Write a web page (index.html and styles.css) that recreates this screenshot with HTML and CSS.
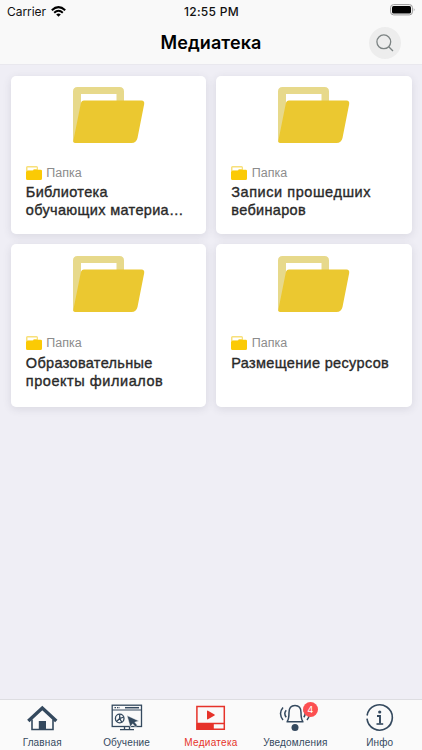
FILE: index.html
```html
<!DOCTYPE html>
<html lang="ru">
<head>
<meta charset="utf-8">
<title>Медиатека</title>
<link rel="stylesheet" href="styles.css">
</head>
<body>
<svg class="defs" width="0" height="0" aria-hidden="true">
  <symbol id="folder" viewBox="0 0 72 56">
    <path fill="#e7d98b" fill-rule="evenodd" d="M4.500 0H46.500Q51 0 51 4.500V17H8L1 55Q0 55 0 53V4.500Q0 0 4.500 0ZM8 7V17H43.500V7Z"/>
    <path fill="#e7d98b" d="M0 16H9L2 55H0Z"/>
    <path fill="#ebc830" d="M11 13.500H68.500Q71.700 13.500 71.200 17L64.500 51Q63.300 56 58.500 56H2Q0 56 .4 53.500L7.800 16.500Q8.400 13.500 11 13.500Z"/>
  </symbol>
  <symbol id="folder-small" viewBox="0 0 16 14">
    <path fill="#f8e07a" fill-rule="evenodd" d="M1.500 0H10.500Q12 0 12 1.500V5H0V1.500Q0 0 1.500 0ZM1.500 1.500V4H7L8 3H10.700V1.500Z"/>
    <path fill="#fbca05" d="M1 5H6.500L8 3.700H14.800Q16 3.700 16 5V12.500Q16 14 14.500 14H1.500Q0 14 0 12.500V6Q0 5 1 5Z"/>
  </symbol>
</svg>
<div class="app">
  <header class="header">
    <div class="status">
      <div class="carrier"><span>Carrier</span>
        <svg width="15" height="11" viewBox="0 0 15 11"><g fill="none" stroke="#000" stroke-width="2"><path d="M.8 4.200Q7.500-2 14.200 4.200"/><path d="M3.200 6.700Q7.500 2.900 11.800 6.700"/></g><path d="M7.500 10.800L5.200 8.400Q7.500 6.500 9.800 8.400Z"/></svg>
      </div>
      <div class="time">12:55 PM</div>
      <svg class="battery" width="26" height="12" viewBox="0 0 26 12"><rect x=".6" y=".6" width="21.800" height="10.300" rx="3" fill="none" stroke="#999"/><rect x="2" y="2" width="19" height="7.500" rx="1.500"/><path d="M23.800 4Q25.300 5.700 23.800 7.500Z" fill="#888"/></svg>
    </div>
    <div class="titlebar">
      <h1>Медиатека</h1>
      <button class="search" aria-label="Поиск"><svg width="18" height="18" viewBox="0 0 18 18" fill="none" stroke="#7c8383" stroke-width="1.300"><circle cx="7.800" cy="7.800" r="6.900"/><path d="M12.700 12.700L17 17"/></svg></button>
    </div>
  </header>
  <main class="grid">
    <article class="card">
      <svg class="folder"><use href="#folder"/></svg>
      <div class="kind"><svg><use href="#folder-small"/></svg><span>Папка</span></div>
      <h2>Библиотека<br>обучающих материа…</h2>
    </article>
    <article class="card">
      <svg class="folder"><use href="#folder"/></svg>
      <div class="kind"><svg><use href="#folder-small"/></svg><span>Папка</span></div>
      <h2><span class="wide">Записи прошедших</span><br>вебинаров</h2>
    </article>
    <article class="card tall">
      <svg class="folder"><use href="#folder"/></svg>
      <div class="kind"><svg><use href="#folder-small"/></svg><span>Папка</span></div>
      <h2>Образовательные<br><span class="wide">проекты филиалов</span></h2>
    </article>
    <article class="card tall">
      <svg class="folder"><use href="#folder"/></svg>
      <div class="kind"><svg><use href="#folder-small"/></svg><span>Папка</span></div>
      <h2>Размещение ресурсов</h2>
    </article>
  </main>
  <nav class="tabs">
    <a class="tab">
      <svg width="32" height="30" viewBox="0 0 32 30"><path fill="none" stroke="#34495e" stroke-width="3.400" d="M2.300 18L16.300 5L30.300 18"/><path fill="none" stroke="#34495e" stroke-width="1.600" d="M6 16.500V26.500H27V16.500"/><path fill="#34495e" d="M12.800 18H20V26.500H12.800Z"/></svg>
      <span>Главная</span>
    </a>
    <a class="tab">
      <svg width="32" height="30" viewBox="0 0 32 30" fill="none" stroke="#34495e" stroke-width="1.300"><rect x="1.200" y="2.200" width="29.300" height="21.300"/><path d="M1 7H30.500" stroke-width="1"/><path stroke-dasharray="1.500 1" d="M3.500 4.700H9"/><path stroke-width="1.500" d="M14 4.700H28"/><circle cx="8.700" cy="15.500" r="4.300"/><path d="M8.700 11.200V15.500L12.700 14M8.700 15.500L5.500 18.500M8.700 15.500L11 19.500"/><path d="M13.500 23.500V26M18.500 23.500V26M9 26.700H23"/><path fill="#34495e" stroke="#fafafa" stroke-width=".5" d="M16 12.500L28 18L23.800 19.200L26.400 22.300L24.300 24L21.700 20.800L19.300 24Z"/></svg>
      <span>Обучение</span>
    </a>
    <a class="tab active">
      <svg width="32" height="30" viewBox="0 0 32 30"><path fill="none" stroke="#e6332a" stroke-width="1.500" d="M1.900 3.500H29.300V26.200H1.900ZM1.900 20.500H29.300"/><path fill="#e6332a" d="M12 8.200Q12 7.200 13 7.700L19.500 11.400Q20.300 12 19.500 12.600L13 16.300Q12 16.800 12 15.800ZM1.500 20.500H18.800V26.500H1.500Z"/></svg>
      <span>Медиатека</span>
    </a>
    <a class="tab">
      <div class="iconbox">
        <svg width="32" height="30" viewBox="0 0 32 30" fill="none" stroke="#34495e" stroke-width="1.500"><path d="M7.500 18.700H24.500M8.200 18.500Q10 16 10 9.500Q10 2.500 16 2.500Q22 2.500 22 9.500Q22 16 23.800 18.500"/><path stroke-width="1.500" d="M4 4.500Q-1 10.500 4 17M7.200 7.200Q4.400 10.500 7.200 14.200M28 4.500Q33 10.500 28 17M24.800 7.200Q27.600 10.500 24.800 14.200"/><circle cx="16" cy="24.500" r="3.500" fill="#34495e" stroke="none"/></svg>
        <b class="badge">4</b>
      </div>
      <span>Уведомления</span>
    </a>
    <a class="tab">
      <svg width="32" height="30" viewBox="0 0 32 30" fill="none" stroke="#34495e" stroke-width="1.600"><path d="M3.100 12.500A12.700 12.700 0 1 1 3 15.700M3.100 16.500A12.700 12.700 0 0 0 28 17.500"/><circle cx="15.700" cy="9" r="1.600" fill="#34495e" stroke="none"/><path stroke-width="1.900" d="M13 13H16V20.500"/><path d="M12.500 21H19.200"/></svg>
      <span>Инфо</span>
    </a>
  </nav>
</div>
</body>
</html>
```
FILE: styles.css
```css
* { box-sizing: border-box; }
body { margin: 0; font-family: "Liberation Sans", sans-serif; background: #efeef5; }
.defs { display: none; }
.app { width: 422px; height: 750px; display: flex; flex-direction: column; overflow: hidden; }
.header { height: 65px; background: #f9f9f9; border-bottom: 1px solid #e9e8ee; flex: none; }
.status { height: 22px; display: grid; grid-template-columns: 1fr auto 1fr; align-items: center; padding: 0 6px 0 7px; font-family: Inter, sans-serif; font-size: 12px; color: #111; }
.carrier { display: flex; align-items: center; gap: 5px; letter-spacing: -.05px; }
.time { font-weight: 500; letter-spacing: .3px; }
.battery { justify-self: end; margin-top: -2px; }
.titlebar { height: 42px; display: grid; grid-template-columns: 1fr auto 1fr; align-items: center; padding-right: 21px; padding-left: 21px; }
.titlebar h1 { grid-column: 2; margin: 0; font: 600 18px/24px Inter, sans-serif; letter-spacing: .1px; color: #000; white-space: nowrap; }
.search { justify-self: end; width: 32px; height: 32px; padding: 0; border: 0; border-radius: 50%; background: #ededed; display: flex; align-items: center; justify-content: center; }
.grid { flex: 1; display: grid; grid-template-columns: 195.500px 195.500px; grid-template-rows: 157.500px 162.500px; gap: 10.500px 10px; padding: 11px 10.500px; align-content: start; }
.card { background: #fff; border-radius: 5px; box-shadow: 0 2px 8px rgba(60, 60, 80, .12); padding: 11px 15px 0 15.300px; display: flex; flex-direction: column; }
.folder { width: 72px; height: 56px; margin-left: 47px; flex: none; }
.kind { display: flex; align-items: center; gap: 4.500px; height: 18px; margin-top: 20.500px; color: #8c8c8c; font-size: 12.500px; }
.kind svg { width: 16px; height: 14px; }
.card h2 { margin: 1.500px 0 0; font-size: 14.500px; line-height: 18px; font-weight: 400; letter-spacing: .33px; color: #292929; -webkit-text-stroke: .35px #292929; white-space: nowrap; }
.card .wide { letter-spacing: .55px; }
.tall { padding-top: 12px; }
.tall .kind { margin-top: 21.500px; }
.tall h2 { margin-top: 2.500px; }
.tabs { height: 51px; flex: none; display: grid; grid-template-columns: repeat(5, 1fr); background: #fafafa; border-top: 1px solid #dddde1; }
.tab { display: flex; flex-direction: column; align-items: center; padding-top: 3px; color: #34495e; font-size: 10px; letter-spacing: .15px; white-space: nowrap; }
.tab > span { line-height: 12px; margin-top: 4px; }
.tab svg { display: block; }
.active { color: #e6332a; letter-spacing: .3px; }
.iconbox { position: relative; }
.badge { position: absolute; left: 23.500px; top: -1px; width: 15px; height: 15px; border-radius: 50%; background: #fc4f51; color: #fff; font: 400 9.500px/15px Inter, sans-serif; text-align: center; }
```
